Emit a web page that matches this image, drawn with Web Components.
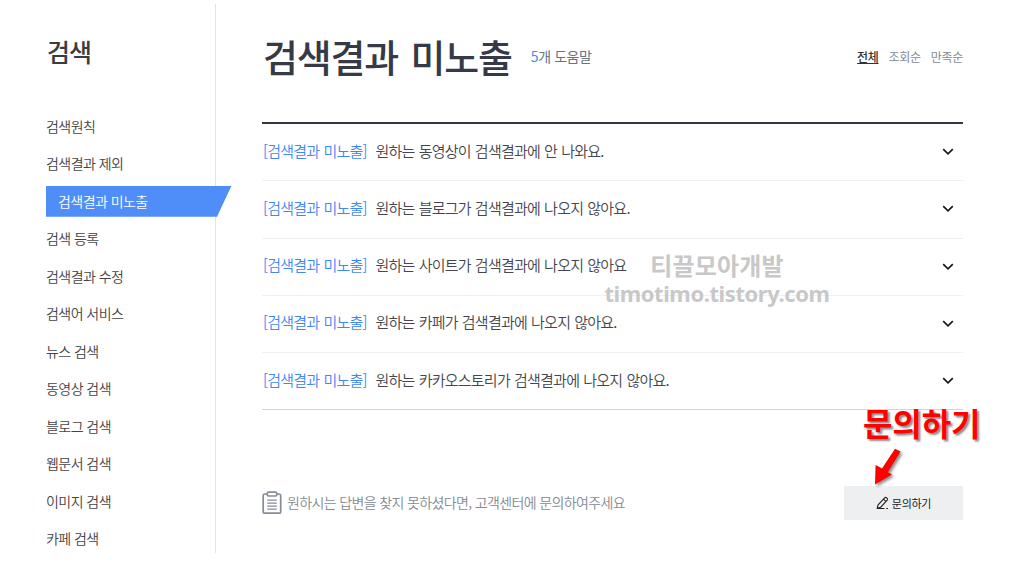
<!DOCTYPE html>
<html lang="ko">
<head>
<meta charset="utf-8">
<title>검색 도움말</title>
<style>
html,body{margin:0;padding:0;background:#fff}
body{width:1028px;height:575px;overflow:hidden;position:relative;font-family:"Noto Sans CJK KR","Noto Sans",sans-serif;color:#333}
</style>
</head>
<body>
<help-page>
  <help-sidebar slot="side" heading="검색">
    <side-item>검색원칙</side-item>
    <side-item>검색결과 제외</side-item>
    <side-item active>검색결과 미노출</side-item>
    <side-item>검색 등록</side-item>
    <side-item>검색결과 수정</side-item>
    <side-item>검색어 서비스</side-item>
    <side-item>뉴스 검색</side-item>
    <side-item>동영상 검색</side-item>
    <side-item>블로그 검색</side-item>
    <side-item>웹문서 검색</side-item>
    <side-item>이미지 검색</side-item>
    <side-item>카페 검색</side-item>
  </help-sidebar>
  <help-header>검색결과 미노출</help-header>
  <faq-list>
    <faq-row>원하는 동영상이 검색결과에 안 나와요.</faq-row>
    <faq-row>원하는 블로그가 검색결과에 나오지 않아요.</faq-row>
    <faq-row>원하는 사이트가 검색결과에 나오지 않아요</faq-row>
    <faq-row>원하는 카페가 검색결과에 나오지 않아요.</faq-row>
    <faq-row>원하는 카카오스토리가 검색결과에 나오지 않아요.</faq-row>
  </faq-list>
  <help-contact>원하시는 답변을 찾지 못하셨다면, 고객센터에 문의하여주세요</help-contact>
</help-page>
<water-mark></water-mark>
<call-out>문의하기</call-out>
<script>
function define(name, html){
  customElements.define(name, class extends HTMLElement{
    constructor(){
      super();
      const t = document.createElement('template');
      t.innerHTML = html;
      this.attachShadow({mode:'open'}).append(t.content.cloneNode(true));
    }
    connectedCallback(){
      const h = this.shadowRoot.querySelector('[data-heading]');
      if(h) h.textContent = this.getAttribute('heading');
    }
  });
}
define('help-page', `<style>
:host{display:grid;grid-template-columns:216px 1fr;column-gap:46px;height:575px}
main{width:701px}
</style><slot name="side"></slot><main><slot></slot></main>`);

define('help-sidebar', `<style>
:host{display:block;box-sizing:border-box;margin-top:4px;height:549px;padding-left:46px;border-right:1px solid #e4e4e4}
h2{margin:0 0 0 1px;padding-top:29px;height:74.6px;font-size:25px;line-height:37px;font-weight:500;letter-spacing:-1px;color:#3c3c3e}
</style><h2 data-heading></h2><nav><slot></slot></nav>`);

define('side-item', `<style>
:host{display:flex;align-items:center;height:37.5px;font-size:14px;letter-spacing:-.56px;color:#444;white-space:nowrap;font-weight:350}
span{line-height:30px;padding-bottom:1px}
:host([active]) span{flex:none;width:173.5px;padding-left:12px;background:#4f8ef8;color:#fff;clip-path:polygon(0 0,100% 0,calc(100% - 14.5px) 100%,0 100%)}
</style><span><slot></slot></span>`);

define('help-header', `<style>
:host{display:flex;box-sizing:border-box;height:122px;padding-top:28px}
h1{margin:0 0 0 1px;font-size:38px;line-height:56px;font-weight:500;letter-spacing:-1.2px;word-spacing:3px;color:#353a46;white-space:nowrap}
.count{margin:17px 0 0 19px;font-size:14px;line-height:22px;letter-spacing:-.4px;color:#6b7280;white-space:nowrap}
b{font-weight:400;color:#4a8af5}
.sort{margin:20px 0 0 auto;display:flex;gap:10px;font-size:12px;line-height:18px;letter-spacing:-.3px;color:#848a96}
.on{color:#333;font-weight:500;text-decoration:underline;text-underline-offset:1px}
</style><h1><slot></slot></h1><div class="count"><b>5</b>개 도움말</div>
<div class="sort"><span class="on">전체</span><span>조회순</span><span>만족순</span></div>`);

define('faq-list', `<style>
:host{display:block;border-top:2px solid #343846;border-bottom:1px solid #d2d3d5}
</style><slot></slot>`);

define('faq-row', `<style>
:host{display:flex;align-items:center;box-sizing:border-box;height:57.25px;padding-bottom:4px;border-bottom:1px solid #f0f0f1;font-size:15px;letter-spacing:-.76px;word-spacing:.6px;white-space:nowrap;color:#45464d;font-weight:350}
:host(:last-child){border-bottom:0;height:56.25px}
.tag{color:#3f87f6;width:112.5px;margin-left:1px;flex:none}
svg{margin:4px 9px 0 auto}
</style><span class="tag">[검색결과 미노출]</span><span><slot></slot></span>
<svg width="12" height="8" viewBox="0 0 12 8"><path d="M1.2 1.2 6 5.8 10.8 1.2" fill="none" stroke="#17181c" stroke-width="1.7"/></svg>`);

define('help-contact', `<style>
:host{display:flex;align-items:center;margin-top:76px;height:34px;font-size:14px;letter-spacing:-.63px;color:#858a94;white-space:nowrap;font-weight:350}
:host>svg,svg.note{margin-bottom:1px}
.text{margin:0 0 2px 5px}
button{margin:0 0 0 auto;width:119px;height:34px;padding:0 0 1px;box-sizing:border-box;border:0;background:#eeeff1;display:flex;align-items:center;justify-content:center;gap:3px;font:400 11px "Noto Sans CJK KR",sans-serif;letter-spacing:-.3px;color:#222}
</style>
<svg class="note" width="20" height="24" viewBox="0 0 20 24" fill="none" stroke="#858c9a" stroke-width="1.7"><path d="M5 3H2.8Q1.2 3 1.2 4.8V20.4Q1.2 22.2 2.8 22.2H16.9Q18.7 22.2 18.7 20.4V4.8Q18.7 3 16.9 3H15"/><rect x="5.2" y="1.1" width="9.6" height="3.9" rx="1.6"/><path d="M5.2 9.2h9.6M5.2 12.2h9.6M5.2 15.2h9.6M5.2 18.2h9.6" stroke-width="1.3"/></svg>
<span class="text"><slot></slot></span>
<button><svg width="13" height="14" viewBox="0 0 13 14" fill="none" stroke="#222" stroke-width="1.1"><path d="M1.3 12.2 2.1 8.8 8.6 1.9Q9.5 1 10.4 1.7L11.2 2.4Q12 3.2 11.2 4.2L4.7 11.2ZM7.4 3.1 9.9 5.4M1.3 12.5H8.5M10.3 12.5h1.7"/></svg><span>문의하기</span></button>`);

define('water-mark', `<style>
:host{position:absolute;left:604px;top:249px;width:226px;text-align:center;font-weight:700;color:#c8c8c8;white-space:nowrap}
div{line-height:32px;font-size:24px;letter-spacing:.2px}
.url{font-family:"Noto Sans",sans-serif;font-size:22px;line-height:26px;margin-top:-1px;letter-spacing:-.42px}
</style><div>티끌모아개발</div><div class="url">timotimo.tistory.com</div>`);

define('call-out', `<style>
:host{position:absolute;left:863px;top:399px;width:120px;color:#f00;font-size:32px;line-height:46px;font-weight:700;letter-spacing:-.1px;white-space:nowrap;text-shadow:2px 2px 2px rgba(0,0,0,.45)}
svg{position:absolute;left:5px;top:45px;filter:drop-shadow(2px 2px 1.5px rgba(0,0,0,.45))}
</style><slot></slot><svg width="42" height="48" viewBox="0 0 42 48"><path d="M27 4.7 32.5 7.5 19.8 28.2 24 30.4 7 40.5 7.6 21 14 24.6Z" fill="#f00"/></svg>`);
</script>
</body>
</html>
